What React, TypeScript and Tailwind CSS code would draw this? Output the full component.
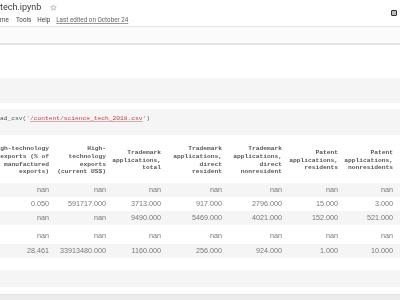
import React from "react";

const headers: string[][] = [
  ["gh-technology", "exports (% of", "manufactured", "exports)"],
  ["High-", "technology", "exports", "(current US$)"],
  ["Trademark", "applications,", "total"],
  ["Trademark", "applications,", "direct", "resident"],
  ["Trademark", "applications,", "direct", "nonresident"],
  ["Patent", "applications,", "residents"],
  ["Patent", "applications,", "nonresidents"],
];

const rows: { vals: string[]; bg: string; h: string }[] = [
  { vals: ["nan", "nan", "nan", "nan", "nan", "nan", "nan"], bg: "bg-[#f5f5f5]", h: "h-[14px]" },
  { vals: ["0.050", "591717.000", "3713.000", "917.000", "2796.000", "15.000", "3.000"], bg: "bg-white", h: "h-[14px]" },
  { vals: ["nan", "nan", "9490.000", "5469.000", "4021.000", "152.000", "521.000"], bg: "bg-[#f5f5f5]", h: "h-[14px]" },
  { vals: ["nan", "nan", "nan", "nan", "nan", "nan", "nan"], bg: "bg-white", h: "h-[19px] pt-[2px]" },
  { vals: ["28.461", "33913480.000", "1160.000", "256.000", "924.000", "1.000", "10.000"], bg: "bg-[#f5f5f5]", h: "h-[14px]" },
];

const grid = "grid grid-cols-[49px_57px_55px_61px_60px_56px_55px]";

export default function App() {
  return (
    <div className="w-[400px] h-[300px] overflow-hidden bg-white flex flex-col antialiased [will-change:transform] font-['Roboto','Liberation_Sans',sans-serif]">
      {/* header */}
      <div className="h-[27px] flex justify-between border-b border-[#e3e3e3] shrink-0">
        <div className="flex flex-col">
          <div className="flex items-center h-[14px] pt-[1px]">
            <span className="text-[9px] text-[#3c3c3c] leading-none">tech.ipynb</span>
            <svg className="ml-[9px]" width="7" height="7" viewBox="0 0 24 24" fill="none" stroke="#9a9a9a" strokeWidth="2">
              <path d="M12 2.5l2.9 6.1 6.6.8-4.9 4.6 1.3 6.6L12 17.3l-5.9 3.3 1.3-6.6-4.9-4.6 6.6-.8z" />
            </svg>
          </div>
          <div className="flex items-center h-[12px] text-[6.3px] text-[#444] leading-none">
            <span>me</span>
            <span className="ml-[7px]">Tools</span>
            <span className="ml-[6px]">Help</span>
            <span className="ml-[6px] text-[#666] underline decoration-[#999]">Last edited on October 24</span>
          </div>
        </div>
        <div className="mt-[10px] mr-[3px] w-[6px] h-[6px] border-[1.5px] border-[#333] bg-[#bbb] rounded-[1px]" />
      </div>
      {/* toolbar band */}
      <div className="h-[16px] bg-[#fbfbfb] shrink-0" />
      <div className="h-[2px] bg-[#e6e6e6] shrink-0" />
      <div className="h-[33px] shrink-0" />
      {/* cells */}
      <div className="h-[25px] bg-[#f5f5f5] shrink-0" />
      <div className="h-[6px] shrink-0" />
      <div className="h-[26px] bg-[#f5f5f5] shrink-0 pt-[7px] font-['Liberation_Mono',monospace] text-[6.25px] leading-none text-[#555] whitespace-pre">
        <span>ad_csv(</span>
        <span className="text-[#999]">'</span>
        <span className="text-[#b54848] underline decoration-[#e6a5a5]">/content/science_tech_2018.csv</span>
        <span className="text-[#999]">'</span>
        <span>)</span>
      </div>
      {/* table header */}
      <div className={`${grid} h-[48px] items-center pt-[3px] shrink-0 font-['Liberation_Mono',monospace] text-[6.25px] leading-[7.7px] font-bold text-[#555]`}>
        {headers.map((h, i) => (
          <div key={i} className="text-right whitespace-pre">
            {h.map((l, j) => (
              <div key={j}>{l}</div>
            ))}
          </div>
        ))}
      </div>
      {/* rows */}
      {rows.map((r, i) => (
        <div key={i} className={`${grid} ${r.bg} ${r.h} items-center shrink-0 font-['Liberation_Sans',sans-serif] text-[7.2px] leading-none text-[#777]`}>
          {r.vals.map((v, j) => (
            <div key={j} className="text-right">{v}</div>
          ))}
        </div>
      ))}
      <div className="h-[12px] shrink-0" />
      <div className="h-[17px] bg-[#f5f5f5] shrink-0" />
      <div className="h-[7px] shrink-0" />
      <div className="flex-1 bg-[#ececec] border-t border-[#e0e0e0]" />
    </div>
  );
}
